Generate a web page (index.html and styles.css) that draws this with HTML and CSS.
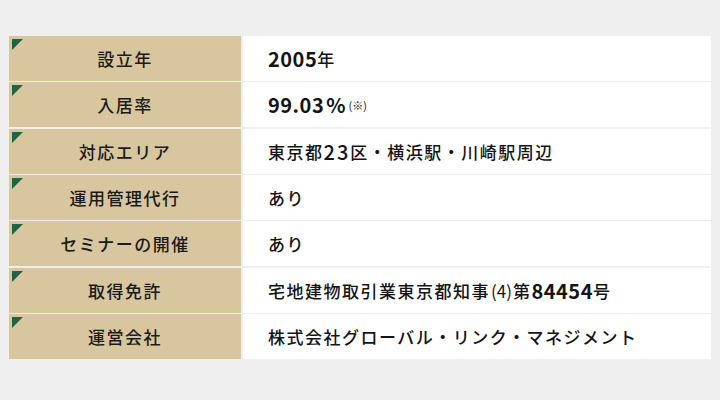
FILE: index.html
```html
<!DOCTYPE html>
<html lang="ja">
<head>
<meta charset="utf-8">
<link rel="stylesheet" href="styles.css">
</head>
<body>
<div class="table">
  <div class="row"><div class="th">設立年</div><div class="td"><span class="num">2005</span>年</div></div>
  <div class="row"><div class="th">入居率</div><div class="td"><span class="num">99.03</span><span class="pct">%</span><span class="note">(※)</span></div></div>
  <div class="row"><div class="th">対応エリア</div><div class="td">東京都<span class="num mid">23</span>区・横浜駅・川崎駅周辺</div></div>
  <div class="row"><div class="th">運用管理代行</div><div class="td">あり</div></div>
  <div class="row"><div class="th">セミナーの開催</div><div class="td">あり</div></div>
  <div class="row"><div class="th">取得免許</div><div class="td">宅地建物取引業東京都知事<span class="paren">(4)</span>第<span class="num">84454</span>号</div></div>
  <div class="row"><div class="th">運営会社</div><div class="td">株式会社グローバル・リンク・マネジメント</div></div>
</div>
</body>
</html>
```
FILE: styles.css
```css
html, body {
  margin: 0;
  padding: 0;
  background: #efefef;
}
body {
  padding: 36px 9px 0 9px;
  font-family: "Noto Sans CJK JP", "Noto Sans", sans-serif;
  color: #1a1a1a;
}
.table {
  display: grid;
  row-gap: 1.33px;
  width: 702px;
}
.row {
  display: grid;
  grid-template-columns: 232px 1fr;
  column-gap: 2px;
  height: 45px;
}
.th {
  position: relative;
  background: #d7c69e;
  display: flex;
  align-items: center;
  justify-content: center;
  font-size: 17px;
  font-weight: 500;
  letter-spacing: 1.5px;
  color: #1a1a1a;
}
.th::before {
  content: "";
  position: absolute;
  left: 3px;
  top: 3px;
  width: 0;
  height: 0;
  border-top: 11px solid #1f6446;
  border-right: 11px solid transparent;
}
.td {
  background: #ffffff;
  display: flex;
  align-items: center;
  padding-left: 25px;
  font-size: 17px;
  font-weight: 500;
  letter-spacing: 1.5px;
  color: #141414;
}
.num {
  font-weight: 700;
  font-size: 20px;
  letter-spacing: 0.5px;
}
.num.mid {
  font-weight: 500;
  letter-spacing: 2px;
}
.pct {
  font-weight: 700;
  font-size: 20px;
  margin-left: 2px;
  letter-spacing: 0;
}
.note {
  font-size: 11px;
  font-weight: 400;
  margin-left: 3px;
  letter-spacing: 0;
}
.paren {
  font-size: 17px;
  font-weight: 400;
  letter-spacing: 0;
  margin: 0 1px;
}
```
